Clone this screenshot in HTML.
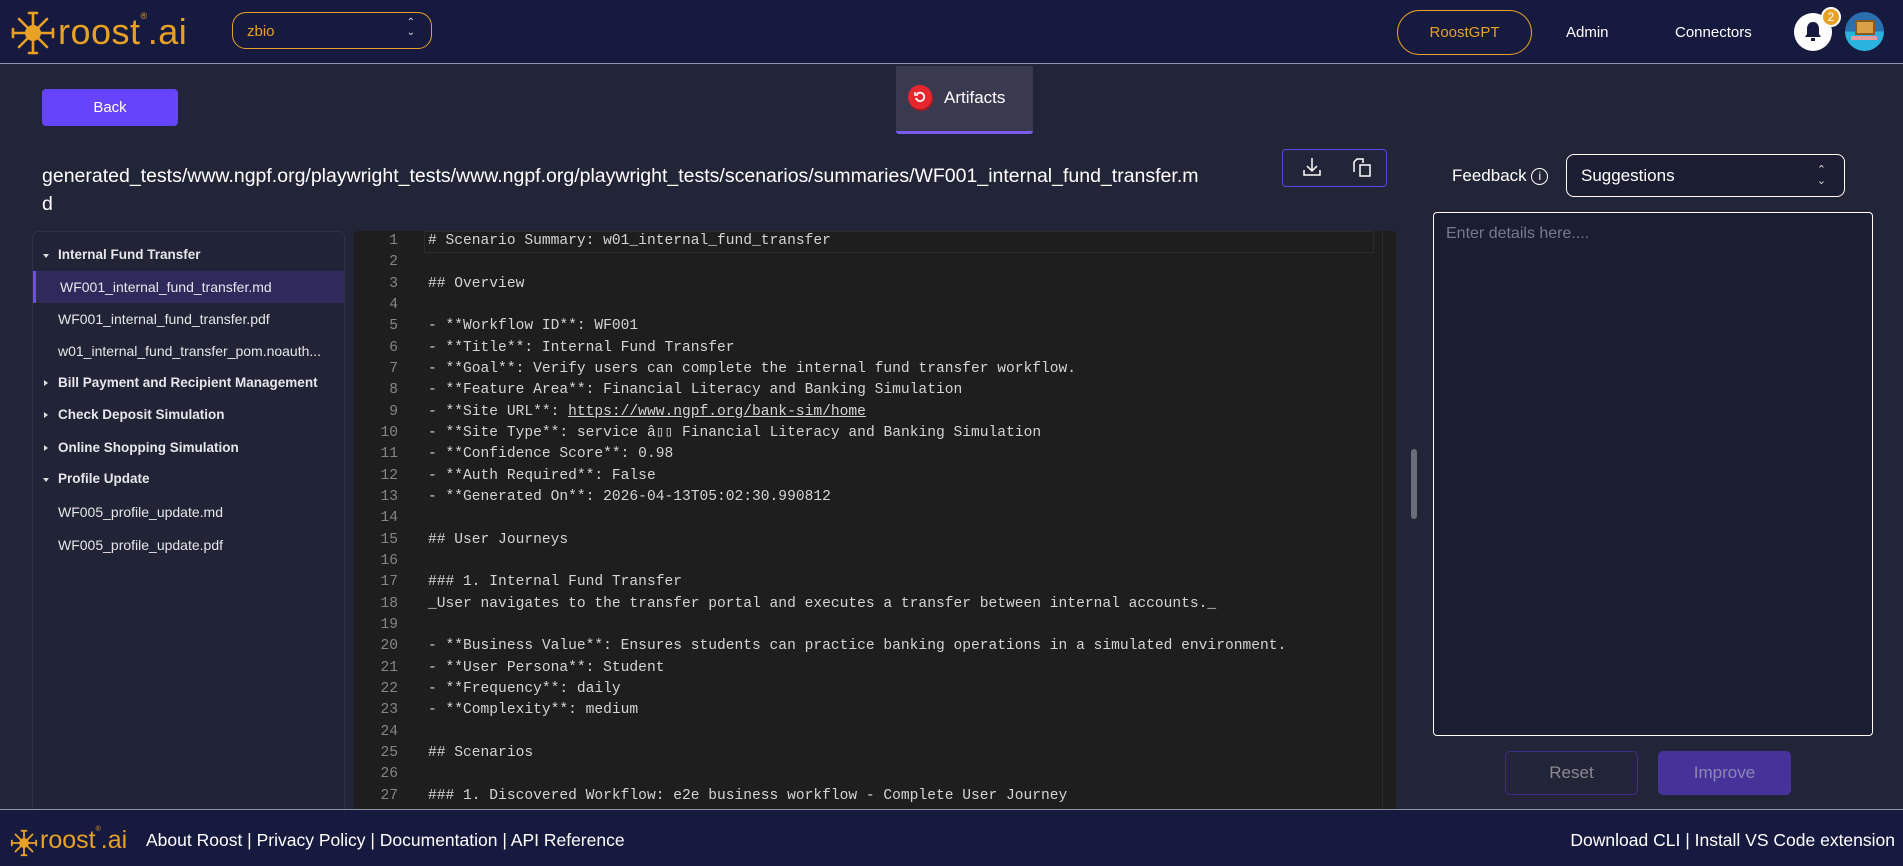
<!DOCTYPE html>
<html><head><meta charset="utf-8"><style>
*{box-sizing:border-box;margin:0;padding:0}
body{width:1903px;height:866px;overflow:hidden;background:#222438;font-family:"Liberation Sans",sans-serif;color:#fff;position:relative}
.abs{position:absolute}
.hdr{left:0;top:0;width:1903px;height:64px;background:#171a3f;border-bottom:1px solid #8a94a8}
.ftr{left:0;top:809px;width:1903px;height:57px;background:#171a3f;border-top:1px solid #8a94a8}
.logo-t{color:#e8a125;font-weight:300}
.sel{left:232px;top:12px;width:200px;height:37px;border:1px solid #e8a125;border-radius:14px;color:#e8a125;font-size:15px;padding:10px 14px}
.nav{font-size:15px;top:24px}
.side{left:32px;top:231px;width:313px;height:590px;border:1px solid #2e3047;border-radius:6px;background:#212336}
.it{position:absolute;left:0;width:311px;height:32px;line-height:32px;font-size:14px;color:#e6e6ea;padding-left:25px;white-space:nowrap}
.grp{font-weight:bold;font-size:13.5px;padding-left:25px}
.grp:before{content:"";position:absolute;left:10px;top:14px;border:3px solid transparent}
.open:before{border-top:4px solid #ddd;border-bottom:0;top:15px}
.cls:before{border-left:4px solid #ddd;border-right:0;top:13px;left:11px}
.ed{left:354px;top:231px;width:1042px;height:578px;background:#1e1e1e;overflow:hidden;border-radius:4px 4px 0 0}
.ln{position:absolute;left:0;width:44px;text-align:right;color:#858585}
.code{font-family:"Liberation Mono",monospace;font-size:14.6px;}
.row{position:absolute;left:0;height:21.33px;line-height:21.33px;width:1042px;white-space:pre;color:#d4d4d4}
.row .t{position:absolute;left:74px}
</style></head><body>

<div class="abs hdr"></div>
<svg class="abs" style="left:10px;top:10px" width="46" height="46" viewBox="0 0 46 46">
<g stroke="#e8a125" stroke-width="2.6" stroke-linecap="round">
<line x1="23" y1="3" x2="23" y2="43"/><line x1="3" y1="23" x2="43" y2="23"/>
<line x1="9" y1="9" x2="37" y2="37"/><line x1="37" y1="9" x2="9" y2="37"/>
<line x1="19" y1="3" x2="27" y2="3"/><line x1="19" y1="43" x2="27" y2="43"/>
<line x1="3" y1="19" x2="3" y2="27"/><line x1="43" y1="19" x2="43" y2="27"/>
</g><circle cx="23" cy="23" r="8" fill="#e8a125"/></svg>
<div class="abs logo-t" style="left:58px;top:11px;font-size:36px;letter-spacing:0.5px">roost<span style="font-size:9px;vertical-align:top">®</span>.ai</div>
<div class="abs sel">zbio<span style="position:absolute;right:16px;top:5px;font-size:10px;line-height:10px;color:#ddd">&#8963;<br>&#8964;</span></div>
<div class="abs" style="left:1397px;top:10px;width:135px;height:45px;border:1px solid #e8a125;border-radius:23px;color:#e8a125;font-size:15px;text-align:center;line-height:43px">RoostGPT</div>
<div class="abs nav" style="left:1566px">Admin</div>
<div class="abs nav" style="left:1675px">Connectors</div>
<div class="abs" style="left:1794px;top:13px;width:38px;height:38px;border-radius:50%;background:#fff"></div>
<svg class="abs" style="left:1802px;top:20px" width="22" height="24" viewBox="0 0 22 24"><path d="M11 2c-4 0-6 3-6 7v5l-2 3h16l-2-3V9c0-4-2-7-6-7z" fill="#171a3f"/><rect x="9" y="18" width="4" height="3" fill="#171a3f"/></svg>
<div class="abs" style="left:1821px;top:7px;width:20px;height:20px;border-radius:50%;background:#e8a125;border:2px solid #fff;font-size:12px;text-align:center;line-height:16px">2</div>
<div class="abs" style="left:1845px;top:12px;width:39px;height:39px;border-radius:50%;background:linear-gradient(#2a6fb0 0 50%,#2bb3e0 50%);overflow:hidden"><div style="position:absolute;left:10px;top:8px;width:20px;height:15px;background:#d9a046;border:2px solid #8a5a20"></div><div style="position:absolute;left:6px;top:24px;width:26px;height:4px;background:#e79aa0"></div></div>

<div class="abs" style="left:42px;top:89px;width:136px;height:37px;background:#6644fb;border-radius:4px;text-align:center;line-height:37px;font-size:15px">Back</div>
<div class="abs" style="left:896px;top:66px;width:137px;height:68px;background:#393a50;border-radius:0 0 3px 3px;border-bottom:3px solid #7a5cf0"></div>
<div class="abs" style="left:908px;top:85px;width:24px;height:24px;border-radius:50%;background:#e8262e;box-shadow:1px 2px 0 #a51a20"></div>
<svg class="abs" style="left:913px;top:90px" width="14" height="14" viewBox="0 0 14 14"><path d="M4 4A4.2 4.2 0 1 1 3 8" fill="none" stroke="#fff" stroke-width="1.8"/><path d="M2 2v3h3" fill="none" stroke="#fff" stroke-width="1.6"/></svg>
<div class="abs" style="left:944px;top:88px;font-size:17px">Artifacts</div>

<div class="abs" style="left:42px;top:162px;width:1165px;font-size:19.5px;line-height:28px;word-break:break-all">generated_tests/www.ngpf.org/playwright_tests/www.ngpf.org/playwright_tests/scenarios/summaries/WF001_internal_fund_transfer.md</div>
<div class="abs" style="left:1282px;top:149px;width:105px;height:38px;border:1px solid #5b44e8;border-radius:4px"></div>
<svg class="abs" style="left:1300px;top:155px" width="24" height="24" viewBox="0 0 24 24" fill="none" stroke="#fff" stroke-width="1.5"><path d="M12 3v13M7 11l5 5 5-5M4 15v5h16v-5"/></svg>
<svg class="abs" style="left:1350px;top:155px" width="24" height="24" viewBox="0 0 24 24" fill="none" stroke="#fff" stroke-width="1.5"><path d="M4 17V7l3-3h6v4M10 10h10v11H10z"/></svg>

<div class="abs" style="left:1452px;top:166px;font-size:17px">Feedback <span style="display:inline-block;width:17px;height:17px;border:1px solid #fff;border-radius:50%;font-size:12px;text-align:center;line-height:15px;vertical-align:1px">i</span></div>
<div class="abs" style="left:1566px;top:154px;width:279px;height:43px;border:1px solid #fff;border-radius:8px;background:#1b1d33;font-size:17px;padding:11px 14px">Suggestions<span style="position:absolute;right:18px;top:10px;font-size:11px;line-height:11px;color:#ddd">&#8963;<br>&#8964;</span></div>
<div class="abs" style="left:1433px;top:212px;width:440px;height:524px;border:1px solid #fff;border-radius:4px;background:#1b1d33;color:#777a8a;font-size:16px;padding:12px 12px">Enter details here....</div>
<div class="abs" style="left:1505px;top:751px;width:133px;height:44px;border:1px solid #3c2f8a;border-radius:5px;color:#8a8a92;font-size:17px;text-align:center;line-height:42px">Reset</div>
<div class="abs" style="left:1658px;top:751px;width:133px;height:44px;background:#45339a;border-radius:5px;color:#8c86b2;font-size:17px;text-align:center;line-height:44px">Improve</div>

<div class="abs side">
<div class="it grp open" style="top:7px">Internal Fund Transfer</div>
<div class="it" style="top:39px;background:#2e2b5c;border-left:3px solid #6c4ef0;padding-left:24px">WF001_internal_fund_transfer.md</div>
<div class="it" style="top:71px">WF001_internal_fund_transfer.pdf</div>
<div class="it" style="top:103px">w01_internal_fund_transfer_pom.noauth...</div>
<div class="it grp cls" style="top:135px">Bill Payment and Recipient Management</div>
<div class="it grp cls" style="top:167px">Check Deposit Simulation</div>
<div class="it grp cls" style="top:200px">Online Shopping Simulation</div>
<div class="it grp open" style="top:231px">Profile Update</div>
<div class="it" style="top:264px">WF005_profile_update.md</div>
<div class="it" style="top:297px">WF005_profile_update.pdf</div>
</div>

<div class="abs ed code">
<div style="position:absolute;left:70px;top:0;width:950px;height:22px;border:1px solid #2c2c2c"></div>
<div style="position:absolute;left:1028px;top:0;width:14px;height:578px;border-left:1px solid #2a2a2a"></div>
<div class="row" style="top:0"><span class="ln">1</span><span class="t"># Scenario Summary: w01_internal_fund_transfer</span></div>
<div class="row" style="top:21.33px"><span class="ln">2</span></div>
<div class="row" style="top:42.67px"><span class="ln">3</span><span class="t">## Overview</span></div>
<div class="row" style="top:64px"><span class="ln">4</span></div>
<div class="row" style="top:85.33px"><span class="ln">5</span><span class="t">- **Workflow ID**: WF001</span></div>
<div class="row" style="top:106.67px"><span class="ln">6</span><span class="t">- **Title**: Internal Fund Transfer</span></div>
<div class="row" style="top:128px"><span class="ln">7</span><span class="t">- **Goal**: Verify users can complete the internal fund transfer workflow.</span></div>
<div class="row" style="top:149.33px"><span class="ln">8</span><span class="t">- **Feature Area**: Financial Literacy and Banking Simulation</span></div>
<div class="row" style="top:170.67px"><span class="ln">9</span><span class="t">- **Site URL**: <span style="text-decoration:underline">https://www.ngpf.org/bank-sim/home</span></span></div>
<div class="row" style="top:192px"><span class="ln">10</span><span class="t">- **Site Type**: service â▯▯ Financial Literacy and Banking Simulation</span></div>
<div class="row" style="top:213.33px"><span class="ln">11</span><span class="t">- **Confidence Score**: 0.98</span></div>
<div class="row" style="top:234.67px"><span class="ln">12</span><span class="t">- **Auth Required**: False</span></div>
<div class="row" style="top:256px"><span class="ln">13</span><span class="t">- **Generated On**: 2026-04-13T05:02:30.990812</span></div>
<div class="row" style="top:277.33px"><span class="ln">14</span></div>
<div class="row" style="top:298.67px"><span class="ln">15</span><span class="t">## User Journeys</span></div>
<div class="row" style="top:320px"><span class="ln">16</span></div>
<div class="row" style="top:341.33px"><span class="ln">17</span><span class="t">### 1. Internal Fund Transfer</span></div>
<div class="row" style="top:362.67px"><span class="ln">18</span><span class="t">_User navigates to the transfer portal and executes a transfer between internal accounts._</span></div>
<div class="row" style="top:384px"><span class="ln">19</span></div>
<div class="row" style="top:405.33px"><span class="ln">20</span><span class="t">- **Business Value**: Ensures students can practice banking operations in a simulated environment.</span></div>
<div class="row" style="top:426.67px"><span class="ln">21</span><span class="t">- **User Persona**: Student</span></div>
<div class="row" style="top:448px"><span class="ln">22</span><span class="t">- **Frequency**: daily</span></div>
<div class="row" style="top:469.33px"><span class="ln">23</span><span class="t">- **Complexity**: medium</span></div>
<div class="row" style="top:490.67px"><span class="ln">24</span></div>
<div class="row" style="top:512px"><span class="ln">25</span><span class="t">## Scenarios</span></div>
<div class="row" style="top:533.33px"><span class="ln">26</span></div>
<div class="row" style="top:554.67px"><span class="ln">27</span><span class="t">### 1. Discovered Workflow: e2e business workflow - Complete User Journey</span></div>
</div>
<div class="abs" style="left:1411px;top:449px;width:6px;height:70px;background:#6a6c78;border-radius:3px"></div>

<div class="abs ftr"></div>
<svg class="abs" style="left:10px;top:829px" width="28" height="28" viewBox="0 0 46 46">
<g stroke="#e8a125" stroke-width="3" stroke-linecap="round">
<line x1="23" y1="3" x2="23" y2="43"/><line x1="3" y1="23" x2="43" y2="23"/>
<line x1="9" y1="9" x2="37" y2="37"/><line x1="37" y1="9" x2="9" y2="37"/>
<line x1="19" y1="3" x2="27" y2="3"/><line x1="19" y1="43" x2="27" y2="43"/>
<line x1="3" y1="19" x2="3" y2="27"/><line x1="43" y1="19" x2="43" y2="27"/>
</g><circle cx="23" cy="23" r="8" fill="#e8a125"/></svg>
<div class="abs logo-t" style="left:40px;top:826px;font-size:25px">roost<span style="font-size:7px;vertical-align:top">®</span>.ai</div>
<div class="abs" style="left:146px;top:830px;font-size:17.5px">About Roost | Privacy Policy | Documentation | API Reference</div>
<div class="abs" style="right:8px;top:830px;font-size:17.5px">Download CLI | Install VS Code extension</div>
</body></html>
